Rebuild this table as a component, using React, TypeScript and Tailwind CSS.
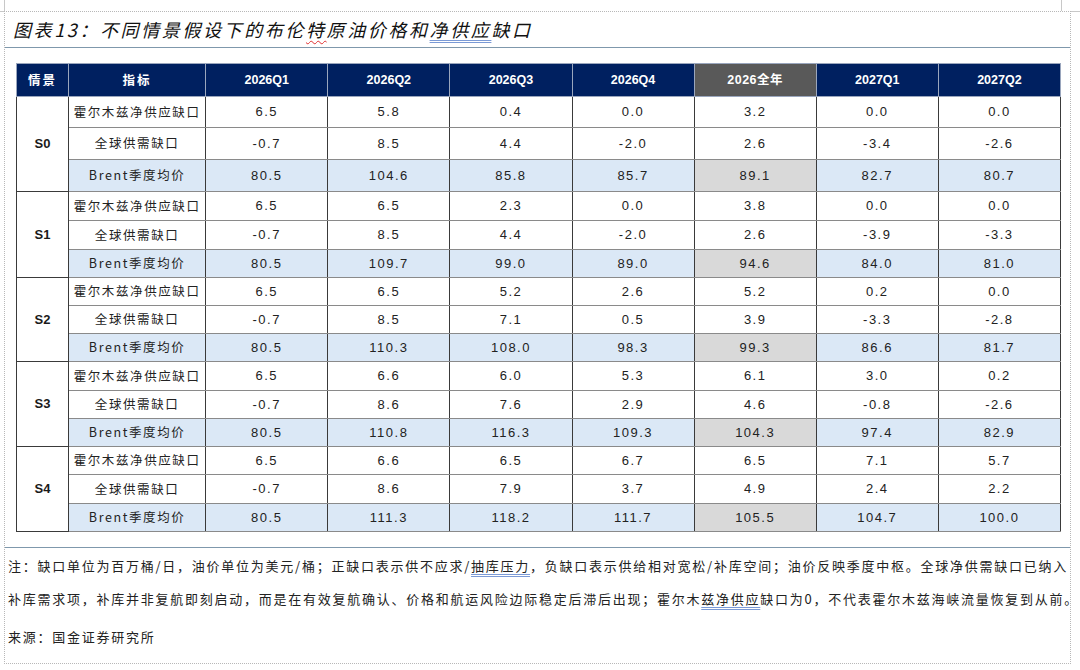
import React from 'react';

const COLS = ['2026Q1', '2026Q2', '2026Q3', '2026Q4', '2026全年', '2027Q1', '2027Q2'];

interface Scenario {
  id: string;
  supply: string[];
  gap: string[];
  brent: string[];
  heights: number[];
}

const SCENARIOS: Scenario[] = [
  {
    id: 'S0',
    supply: ['6.5', '5.8', '0.4', '0.0', '3.2', '0.0', '0.0'],
    gap: ['-0.7', '8.5', '4.4', '-2.0', '2.6', '-3.4', '-2.6'],
    brent: ['80.5', '104.6', '85.8', '85.7', '89.1', '82.7', '80.7'],
    heights: [31, 32, 32],
  },
  {
    id: 'S1',
    supply: ['6.5', '6.5', '2.3', '0.0', '3.8', '0.0', '0.0'],
    gap: ['-0.7', '8.5', '4.4', '-2.0', '2.6', '-3.9', '-3.3'],
    brent: ['80.5', '109.7', '99.0', '89.0', '94.6', '84.0', '81.0'],
    heights: [29, 29, 28],
  },
  {
    id: 'S2',
    supply: ['6.5', '6.5', '5.2', '2.6', '5.2', '0.2', '0.0'],
    gap: ['-0.7', '8.5', '7.1', '0.5', '3.9', '-3.3', '-2.8'],
    brent: ['80.5', '110.3', '108.0', '98.3', '99.3', '86.6', '81.7'],
    heights: [28, 28, 28],
  },
  {
    id: 'S3',
    supply: ['6.5', '6.6', '6.0', '5.3', '6.1', '3.0', '0.2'],
    gap: ['-0.7', '8.6', '7.6', '2.9', '4.6', '-0.8', '-2.6'],
    brent: ['80.5', '110.8', '116.3', '109.3', '104.3', '97.4', '82.9'],
    heights: [29, 28, 28],
  },
  {
    id: 'S4',
    supply: ['6.5', '6.6', '6.5', '6.7', '6.5', '7.1', '5.7'],
    gap: ['-0.7', '8.6', '7.9', '3.7', '4.9', '2.4', '2.2'],
    brent: ['80.5', '111.3', '118.2', '111.7', '105.5', '104.7', '100.0'],
    heights: [28, 29, 28],
  },
];

const CJK = "font-['Noto_Sans_CJK_SC',sans-serif]";
const NUM = "font-['Liberation_Sans','Noto_Sans_CJK_SC',sans-serif]";

function ScenarioRows({ s }: { s: Scenario }) {
  const rows = [
    { label: '霍尔木兹净供应缺口', values: s.supply, brent: false },
    { label: '全球供需缺口', values: s.gap, brent: false },
    { label: 'Brent季度均价', values: s.brent, brent: true },
  ];
  return (
    <>
      {rows.map((r, i) => (
        <tr key={r.label} className={r.brent ? 'bg-[#dbe8f6]' : 'bg-white'}>
          {i === 0 && (
            <td
              rowSpan={3}
              className={`bg-white border border-[#3a3a3a] text-center text-[13px] font-bold text-[#1a1a1a] ${NUM}`}
            >
              {s.id}
            </td>
          )}
          <td
            style={{ height: s.heights[i] }}
            className={`border-x border-[#3a3a3a] border-b border-b-[#8a8a8a] text-center text-[12.5px] tracking-[1.6px] text-[#222] ${CJK}`}
          >
            {r.label}
          </td>
          {r.values.map((v, j) => (
            <td
              key={j}
              className={`border-x border-[#3a3a3a] border-b border-b-[#8a8a8a] text-center text-[13px] tracking-[1.5px] text-[#222] ${NUM} ${
                j === 4 && r.brent ? 'bg-[#d9d9d9]' : ''
              }`}
            >
              {v}
            </td>
          ))}
        </tr>
      ))}
    </>
  );
}

export default function App() {
  return (
    <div className="w-[1080px] h-[670px] bg-white relative overflow-hidden">
      {/* corner marks of the text area */}
      <div className="absolute left-0 top-[11px] w-[4px] border-t border-[#c8c8c8]" />
      <div className="absolute left-[4px] top-0 h-[11px] border-l border-[#c8c8c8]" />
      <div className="absolute left-[1061px] top-0 h-[11px] border-l border-[#c8c8c8]" />
      <div className="absolute left-[1071px] top-[11px] w-[9px] border-t border-[#c8c8c8]" />

      <div className="ml-[4px] mt-[11px] w-[1067px] h-[653px] border border-dotted border-[#b8b8b8] flex flex-col">
        <div className="h-[36px] flex items-center pl-[8px] border-b border-[#7f98ac]">
          <span className={`text-[18px] italic tracking-[2.6px] text-[#111] ${CJK}`}>
            图表13：不同情景假设下的布伦
            <span className="underline decoration-wavy decoration-[#e03030] decoration-1 underline-offset-[3px]">特</span>
            原油价格和
            <span className="underline decoration-double decoration-[#7b9ad6] decoration-1 underline-offset-[3px]">净供应</span>
            缺口
          </span>
        </div>

        <div className="pl-[11px] pt-[15px]">
          <table className="border-collapse table-fixed w-[1045px] border border-[#3a3a3a]">
            <colgroup>
              <col className="w-[52px]" />
              <col className="w-[137px]" />
              {COLS.map(c => (
                <col key={c} className="w-[122px]" />
              ))}
            </colgroup>
            <thead>
              <tr className="h-[33px] bg-[#002060]">
                <th className={`border border-[#9aa6bd] text-white text-[12.5px] font-bold tracking-[2px] ${CJK}`}>情景</th>
                <th className={`border border-[#9aa6bd] text-white text-[12.5px] font-bold tracking-[2px] ${CJK}`}>指标</th>
                {COLS.map((c, i) => (
                  <th
                    key={c}
                    className={`border border-[#9aa6bd] text-white text-[12.5px] font-bold ${NUM} ${
                      i === 4 ? 'bg-[#595959] tracking-[0.5px]' : ''
                    }`}
                  >
                    {c}
                  </th>
                ))}
              </tr>
            </thead>
            <tbody>
              {SCENARIOS.map(s => (
                <ScenarioRows key={s.id} s={s} />
              ))}
            </tbody>
          </table>
        </div>

        <div className="mt-[15px] border-t border-[#7f98ac] pl-[3px] pt-[8px] text-[13px] tracking-[1.75px] text-[#222]">
          <div className={`h-[20px] leading-[20px] whitespace-nowrap ${CJK}`}>
            注：缺口单位为百万桶/日，油价单位为美元/桶；正缺口表示供不应求/
            <span className="underline decoration-double decoration-[#7b9ad6] underline-offset-[3px]">抽库压力</span>
            ，负缺口表示供给相对宽松/补库空间；油价反映季度中枢。全球净供需缺口已纳入
          </div>
          <div className={`mt-[13px] h-[20px] leading-[20px] whitespace-nowrap ${CJK}`}>
            补库需求项，补库并非复航即刻启动，而是在有效复航确认、价格和航运风险边际稳定后滞后出现；霍尔木
            <span className="underline decoration-double decoration-[#7b9ad6] underline-offset-[3px]">兹净供应</span>
            缺口为0，不代表霍尔木兹海峡流量恢复到从前。
          </div>
          <div className={`mt-[18px] h-[20px] leading-[20px] whitespace-nowrap ${CJK}`}>来源：国金证券研究所</div>
        </div>
      </div>
    </div>
  );
}
